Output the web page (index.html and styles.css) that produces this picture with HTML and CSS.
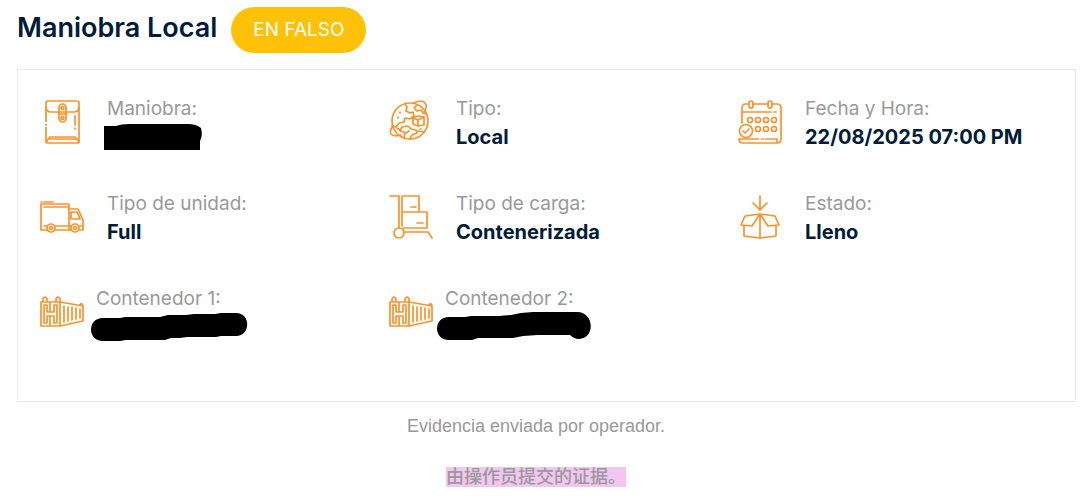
FILE: index.html
```html
<!DOCTYPE html>
<html lang="es">

<head>
    <meta charset="UTF-8">
    <meta name="viewport" content="width=device-width, initial-scale=1.0">
    <title>Maniobra Local</title>
    <link rel="stylesheet" href="styles.css">
</head>

<body>
    <header class="heading">
        <h1>Maniobra Local</h1>
        <span class="badge">EN FALSO</span>
    </header>

    <main class="panel">
        <div class="item">
            <svg class="icon" viewBox="0 0 44 44">
                <rect x="6" y="1" width="33" height="42" rx="2" />
                <path d="M6 8q1 4 5 4h8M26 12h8q4 0 5-4M6 42l4-5h25l4 5M10 39h25M35 16v9M35 28v1" />
                <rect x="19" y="4" width="7" height="18" rx="3.5" />
                <circle cx="22.500" cy="8" r="1.500" />
                <circle cx="22.500" cy="18" r="1.500" />
                <path d="M19 12h7M19 14h7" />
                <path class="gap" d="M6 22v2M6 26v1" />
            </svg>
            <div class="text">
                <span class="label">Maniobra:</span>
                <svg class="mark" viewBox="0 0 160 29">
                    <path d="M5 3h12q5-2 14-2h58q8 0 13 4q2 8-1 13v9H5z" />
                </svg>
            </div>
        </div>

        <div class="item">
            <svg class="icon" viewBox="0 0 44 44">
                <circle cx="21" cy="21" r="18" />
                <path d="M25 3q8-4 11 0q3 4-1 9M4 26q-4 5-2 8q3 3 10 1" />
                <path d="M16 4l2 3-1 4 4 2 3-1 1 4-4 3-5-1-1 4-5 1-3 4-4-1M28 5l-3 3 3 3 4-1 2 3 3 1" />
                <path d="M11 31l2-4 6-1 3 3 5 1 1 3-5 2-2 4M12 31l5 2 3-2M16 33l-1 5M29 31l6 1M8 28l4 3" />
                <path d="M24 18l5-2 6 1v8l-6 1-5-2zM24 18l5 2 6-3M29 20v6" />
                <path d="M11 12v1M9 17v1M31 29h1" />
            </svg>
            <div class="text">
                <span class="label">Tipo:</span>
                <span class="value">Local</span>
            </div>
        </div>

        <div class="item">
            <svg class="icon" viewBox="0 0 44 44">
                <path d="M4 23V8q0-4 4-4h3M15 4h15M34 4h5q4 0 4 4v31q0 4-4 4H5q-4 0-4-4h38v4M4 12h29M36 12h2" />
                <rect x="11" y="1" width="4" height="7" rx="2" />
                <rect x="30" y="1" width="4" height="7" rx="2" />
                <circle cx="12" cy="20" r="2.500" />
                <circle cx="20" cy="20" r="2.500" />
                <circle cx="28" cy="20" r="2.500" />
                <circle cx="36" cy="20" r="2.500" />
                <circle cx="20" cy="29" r="2.500" />
                <circle cx="28" cy="29" r="2.500" />
                <circle cx="36" cy="29" r="2.500" />
                <circle cx="8" cy="31" r="6.500" />
                <path d="M5 31l2 2 4-4" />
                <path class="gap" d="M21 39h2M26 39h1" />
            </svg>
            <div class="text">
                <span class="label">Fecha y Hora:</span>
                <span class="value">22/08/2025 07:00 PM</span>
            </div>
        </div>

        <div class="item">
            <svg class="icon" viewBox="0 0 44 44">
                <path d="M7 35H1V9h28v26H15M1 7h1M4 7h9M4 12h25M4 31h3M15 31h14" />
                <path d="M29 14h9l4 9 1 2v10h-4M31 35h-2M31 17h6l3 7h-9zM29 31h2M40 31h3" />
                <circle cx="11" cy="33" r="4" />
                <circle cx="11" cy="33" r="1.500" />
                <circle cx="35" cy="33" r="4" />
                <circle cx="35" cy="33" r="1.500" />
            </svg>
            <div class="text">
                <span class="label">Tipo de unidad:</span>
                <span class="value">Full</span>
            </div>
        </div>

        <div class="item">
            <svg class="icon" viewBox="0 0 44 44">
                <path d="M1 1h9v32M13 31V1h17v16M13 17h25v16H14M22 12h5M28 28h6" />
                <circle cx="10" cy="38" r="5" />
                <path d="M15 37h24l4 6" />
            </svg>
            <div class="text">
                <span class="label">Tipo de carga:</span>
                <span class="value">Contenerizada</span>
            </div>
        </div>

        <div class="item">
            <svg class="icon" viewBox="0 0 44 44">
                <path d="M22 1v13M15 8l7 7 7-7" />
                <path d="M22 19L7 21 3 30l11 1 8-12 8 12 11-1-4-9zM22 19v24M6 31v10l16 2 16-2V31" />
            </svg>
            <div class="text">
                <span class="label">Estado:</span>
                <span class="value">Lleno</span>
            </div>
        </div>

        <div class="item item-container">
            <svg class="icon" viewBox="0 0 44 44">
                <path d="M1 12h19v24H1zM20 12l23 4v15l-23 5M3 12V9q2-4 4 0v3M16 12V9q2-4 4 0v3M40 15q2-3 3 1" />
                <path d="M4 33V15h3v7h7v-7h3v18h-3v-7H7v7zM10 13v9M10 26v9" />
                <path d="M24 16v16M28 17v14M32 17v13M36 18v11M40 19v9" />
            </svg>
            <div class="text">
                <span class="label">Contenedor 1:</span>
                <svg class="mark" viewBox="0 0 160 29">
                    <path d="M15 5h17l5-1h35l8-2h18l8-1h21l6-1h15c15 0 15 23 0 23h-15l-5 1h-29l-7 1h-9l-6 2H38l-6 1H15C-1 28-1 5 15 5z" />
                </svg>
            </div>
        </div>

        <div class="item item-container">
            <svg class="icon" viewBox="0 0 44 44">
                <path d="M1 12h19v24H1zM20 12l23 4v15l-23 5M3 12V9q2-4 4 0v3M16 12V9q2-4 4 0v3M40 15q2-3 3 1" />
                <path d="M4 33V15h3v7h7v-7h3v18h-3v-7H7v7zM10 13v9M10 26v9" />
                <path d="M24 16v16M28 17v14M32 17v13M36 18v11M40 19v9" />
            </svg>
            <div class="text">
                <span class="label">Contenedor 2:</span>
                <svg class="mark" viewBox="0 0 160 29">
                    <path d="M12 4h16l6-1h28l12-1 10-2 12-1h44c18 0 18 27 2 27q-5 0-9-4h-32l-15 1-10 2H41l-6 2H12C-4 27-4 4 12 4z" />
                </svg>
            </div>
        </div>
    </main>

    <footer class="caption">
        <p>Evidencia enviada por operador.</p>
        <p lang="zh-CN"><mark>由操作员提交的证据。</mark></p>
    </footer>
</body>

</html>
```

FILE: styles.css
```css
body {
    margin: 0;
    padding: 7px 16px 0 17px;
    background: #fff;
    font-family: Inter, "Liberation Sans", sans-serif;
}

.heading {
    display: flex;
    align-items: flex-start;
    gap: 14px;
    margin-bottom: 16px;
}

h1 {
    margin: 0;
    color: #001c38;
    font-size: 27px;
    font-weight: 600;
    line-height: 42px;
}

.badge {
    padding: 0 22px;
    border-radius: 23px;
    background: #ffc107;
    color: #fff;
    font-size: 19px;
    line-height: 46px;
}

.panel {
    display: grid;
    grid-template-columns: repeat(3, 1fr);
    row-gap: 37px;
    padding: 24px 5px 59px;
    border: 1px solid #e9e9e9;
}

.item {
    display: flex;
    gap: 23px;
    padding-left: 17px;
}

.item-container {
    gap: 12px;
}

.icon {
    flex: none;
    width: 44px;
    height: 44px;
    margin-top: 6px;
    fill: none;
    stroke: #f9922b;
    stroke-width: 1.7;
    stroke-linecap: round;
    stroke-linejoin: round;
}

.icon .gap {
    stroke: #fff;
    stroke-width: 3;
    stroke-linecap: butt;
}

.text {
    display: flex;
    flex-direction: column;
    line-height: 29px;
    white-space: nowrap;
}

.label {
    color: #999;
    font-size: 19px;
}

.value {
    color: #001c38;
    font-size: 20px;
    font-weight: 700;
}

.mark {
    width: 160px;
    height: 29px;
    margin-left: -8px;
    overflow: visible;
}

.caption {
    padding-right: 21px;
    color: #999;
    font-family: "Liberation Sans", "Noto Sans CJK SC", sans-serif;
    font-size: 18px;
    line-height: 20px;
    text-align: center;
}

.caption p {
    margin: 14px 0 31px;
}

.caption mark {
    display: inline-block;
    background: #f3c6f1;
    color: #999;
    font-weight: 500;
}
```
